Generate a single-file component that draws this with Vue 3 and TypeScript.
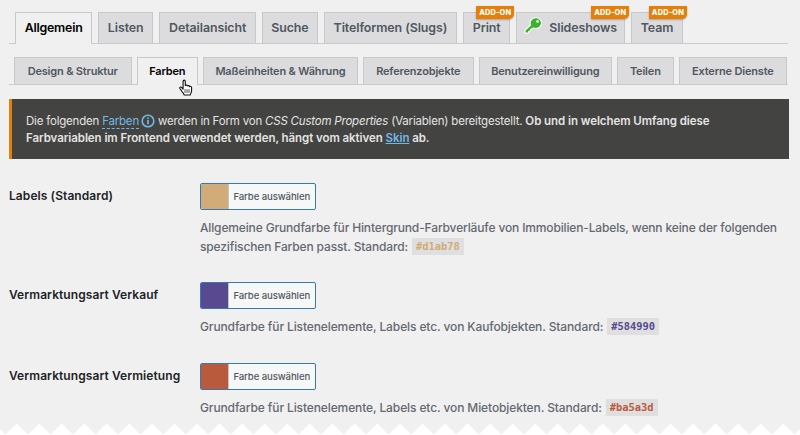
<script setup lang="ts">
interface Tab {
  label: string
  width: number
  active?: boolean
  addon?: boolean
  icon?: boolean
}
interface ColorField {
  key: string
  label: string
  color: string
  lines: string[]
}

const mainTabs: Tab[] = [
  { label: 'Allgemein', width: 77.2, active: true },
  { label: 'Listen', width: 55 },
  { label: 'Detailansicht', width: 97 },
  { label: 'Suche', width: 55.5 },
  { label: 'Titelformen (Slugs)', width: 133.5 },
  { label: 'Print', width: 47, addon: true },
  { label: 'Slideshows', width: 109, addon: true, icon: true },
  { label: 'Team', width: 51.7, addon: true },
]
const subTabs: Tab[] = [
  { label: 'Design & Struktur', width: 117.5 },
  { label: 'Farben', width: 61.5, active: true },
  { label: 'Maßeinheiten & Währung', width: 154.8 },
  { label: 'Referenzobjekte', width: 111 },
  { label: 'Benutzereinwilligung', width: 133 },
  { label: 'Teilen', width: 57 },
  { label: 'Externe Dienste', width: 108 },
]
const fields: ColorField[] = [
  {
    key: 'standard',
    label: 'Labels (Standard)',
    color: '#d1ab78',
    lines: [
      'Allgemeine Grundfarbe für Hintergrund-Farbverläufe von Immobilien-Labels, wenn keine der folgenden',
      'spezifischen Farben passt. Standard:',
    ],
  },
  {
    key: 'sale',
    label: 'Vermarktungsart Verkauf',
    color: '#584990',
    lines: ['Grundfarbe für Listenelemente, Labels etc. von Kaufobjekten. Standard:'],
  },
  {
    key: 'rent',
    label: 'Vermarktungsart Vermietung',
    color: '#ba5a3d',
    lines: ['Grundfarbe für Listenelemente, Labels etc. von Mietobjekten. Standard:'],
  },
]
</script>

<template>
  <main class="page">
    <nav class="tabs main-tabs">
      <a
        v-for="t in mainTabs"
        :key="t.label"
        class="tab"
        :class="{ active: t.active }"
        :style="{ width: t.width + 'px' }"
      >
        <svg v-if="t.icon" class="key-icon" viewBox="0 0 18 18">
          <g stroke="#fff" stroke-width="2.2" stroke-linejoin="round" fill="#fff">
            <path d="M8.2 7.3 1.6 13.6 1.5 15.6 4 15.4 4.3 13.9 5.9 13.5 6.3 12 10.6 9.7Z" />
            <ellipse cx="11.8" cy="6.1" rx="5.2" ry="4.8" />
          </g>
          <path fill="#3db22d" d="M8.2 7.3 1.6 13.6 1.5 15.6 4 15.4 4.3 13.9 5.9 13.5 6.3 12 10.6 9.7Z" />
          <ellipse cx="11.8" cy="6.1" rx="5.2" ry="4.8" fill="#3db22d" />
          <circle cx="13.5" cy="4.5" r="1.4" fill="#e8f5e6" />
        </svg>
        <span>{{ t.label }}</span>
        <b v-if="t.addon" class="addon">ADD-ON</b>
      </a>
    </nav>

    <nav class="tabs sub-tabs">
      <a
        v-for="t in subTabs"
        :key="t.label"
        class="tab"
        :class="{ active: t.active }"
        :style="{ width: t.width + 'px' }"
      >
        <span>{{ t.label }}</span>
        <svg v-if="t.active" class="cursor" viewBox="0 0 16 18">
          <path
            d="M5.1 10.2V2.4c0-1.7 2.2-1.7 2.2 0v4.2c.3-.8 2-.7 2.2.4.5-.7 2-.5 2.1.6.7-.6 2-.2 2 1v3.2c0 1.7-1.1 2.6-1.3 4.2H6.1c-.3-1.7-1.7-2.6-2.5-4.1L1.9 9.5c-.6-1.2.8-2 1.7-1.1z"
            fill="#fff" stroke="#111" stroke-width="1.1" stroke-linejoin="round"
          />
          <path d="M7 10.2v3.7M9 10.2v3.7M11 10.2v3.7" stroke="#222" stroke-width=".8" fill="none" />
        </svg>
      </a>
    </nav>

    <section class="notice">
      <p class="notice-first">
        Die folgenden <a class="term">Farben</a><svg class="info" viewBox="0 0 14 14">
          <circle cx="7" cy="7" r="5.8" fill="none" stroke="#72b8e6" stroke-width="1.6" />
          <path d="M7 6.1v4.2M7 3.5v1.5" stroke="#72b8e6" stroke-width="1.7" />
        </svg><span>werden in Form von <em>CSS Custom Properties</em> (Variablen) bereitgestellt. </span><strong>Ob und in welchem Umfang diese</strong>
      </p>
      <p class="notice-second">
        Farbvariablen im Frontend verwendet werden, hängt vom aktiven <a class="skin">Skin</a> ab.
      </p>
    </section>

    <section class="fields">
      <div v-for="f in fields" :key="f.key" class="field" :class="f.key">
        <label class="field-label">{{ f.label }}</label>
        <div class="field-body">
          <button class="picker" type="button">
            <i class="swatch" :style="{ background: f.color }"></i>
            <span class="picker-text">Farbe auswählen</span>
          </button>
          <p class="description">
            <span v-for="(line, i) in f.lines" :key="i" class="line">
              <span>{{ line }}</span>
              <code v-if="i === f.lines.length - 1" :style="{ color: f.color }">{{ f.color }}</code>
            </span>
          </p>
        </div>
      </div>
    </section>

    <svg class="torn-edge" viewBox="0 0 800 12">
      <defs>
        <pattern id="teeth" x="5.4" width="22.545" height="12" patternUnits="userSpaceOnUse">
          <path d="M0 11.6 11.27 .5 22.545 11.6V12H0z" fill="#fff" />
        </pattern>
      </defs>
      <rect width="800" height="12" fill="url(#teeth)" />
    </svg>
  </main>
</template>

<style>
body {
  margin: 0;
  background: #f0f0f0;
}
</style>

<style scoped>
.page {
  position: relative;
  box-sizing: border-box;
  width: 800px;
  height: 435px;
  padding: 12px 12px 0 9px;
  overflow: hidden;
  background: #f0f0f0;
  color: #1d2327;
  font-family: Inter, "Liberation Sans", sans-serif;
  white-space: nowrap;
}
.tabs {
  display: flex;
  box-sizing: border-box;
  width: 779px;
  border-bottom: 1px solid #c9caca;
}
.tab {
  position: relative;
  display: flex;
  box-sizing: border-box;
  flex: none;
  align-items: center;
  justify-content: center;
  border: 1px solid #c6c8ca;
  border-bottom: 0;
  background: #dcdcde;
  color: #50575e;
  font-weight: 600;
}
.tab.active {
  margin-bottom: -1px;
  padding-bottom: 1px;
  background: #f0f0f0;
  color: #000;
}
.main-tabs {
  height: 31.5px;
  gap: 6px;
  padding-left: 6px;
  font-size: 12.4px;
  letter-spacing: -0.08px;
}
.main-tabs .active {
  letter-spacing: -0.22px;
}
.sub-tabs {
  height: 28px;
  gap: 5px;
  margin-top: 13.5px;
  padding-left: 5px;
  font-size: 11px;
  letter-spacing: -0.18px;
}
.addon {
  position: absolute;
  top: -7px;
  right: -5px;
  width: 38px;
  height: 13px;
  border-radius: 0 0 5px 0;
  background: #e77e05;
  box-shadow: 0 1px 2px rgb(0 0 0 / 25%);
  color: #fff;
  font-size: 7.4px;
  font-weight: 800;
  letter-spacing: 0.15px;
  line-height: 14px;
  text-align: center;
}
.key-icon {
  width: 18px;
  height: 18px;
  margin: -4px 7px 0 0;
  overflow: visible;
}
.cursor {
  position: absolute;
  top: 21px;
  left: 40px;
  z-index: 2;
  width: 16px;
  height: 18px;
}
.notice {
  box-sizing: border-box;
  width: 780px;
  height: 60px;
  margin-top: 14px;
  padding: 14px 0 0 14px;
  border-left: 3px solid #e77e05;
  background: #434341;
  color: #e4e4e3;
  font-size: 11.5px;
  line-height: 17px;
}
.notice p {
  margin: 0;
}
.notice .notice-first {
  font-weight: 430;
  letter-spacing: -0.2px;
}
.notice .notice-second {
  font-weight: 600;
  letter-spacing: -0.065px;
}
.notice strong {
  font-weight: 600;
  letter-spacing: -0.06px;
}
.term {
  border-bottom: 1px dashed #72b8e6;
  color: #72b8e6;
}
.skin {
  color: #72b8e6;
  text-decoration: underline;
}
.info {
  width: 14px;
  height: 14px;
  margin: 0 3px 0 2px;
  vertical-align: -3px;
}
.fields {
  padding-top: 24px;
}
.field {
  display: grid;
  grid-template-columns: 191px 1fr;
  height: 81px;
}
.field.standard {
  height: 98.5px;
}
.field-label {
  padding-top: 5px;
  font-size: 12px;
  font-weight: 600;
  letter-spacing: 0.08px;
  line-height: 16px;
}
.picker {
  display: flex;
  box-sizing: border-box;
  width: 116px;
  height: 27px;
  padding: 0;
  overflow: hidden;
  border: 1px solid #337ab5;
  border-radius: 2px;
  background: #f6f7f7;
  font-family: inherit;
}
.swatch {
  width: 26.5px;
  height: 25px;
}
.picker-text {
  flex: 1;
  border-left: 1px solid #c3c4c7;
  color: #50575e;
  font-size: 9.6px;
  font-weight: 450;
  line-height: 26px;
  text-align: center;
  letter-spacing: -0.1px;
}
.description {
  margin: 9px 0 0;
  color: #646970;
  font-size: 12px;
  font-weight: 450;
  letter-spacing: -0.115px;
  line-height: 18.5px;
}
.standard .description {
  letter-spacing: -0.145px;
}
.line {
  display: flex;
  align-items: center;
  height: 18.5px;
}
code {
  height: 17px;
  margin-left: 4px;
  padding: 0 4px;
  background: #dfdfe0;
  font-family: "DejaVu Sans Mono", monospace;
  font-size: 10.4px;
  font-weight: 700;
  letter-spacing: 0;
  line-height: 17px;
}
.torn-edge {
  position: absolute;
  bottom: 0;
  left: 0;
  width: 800px;
  height: 12px;
}
</style>
